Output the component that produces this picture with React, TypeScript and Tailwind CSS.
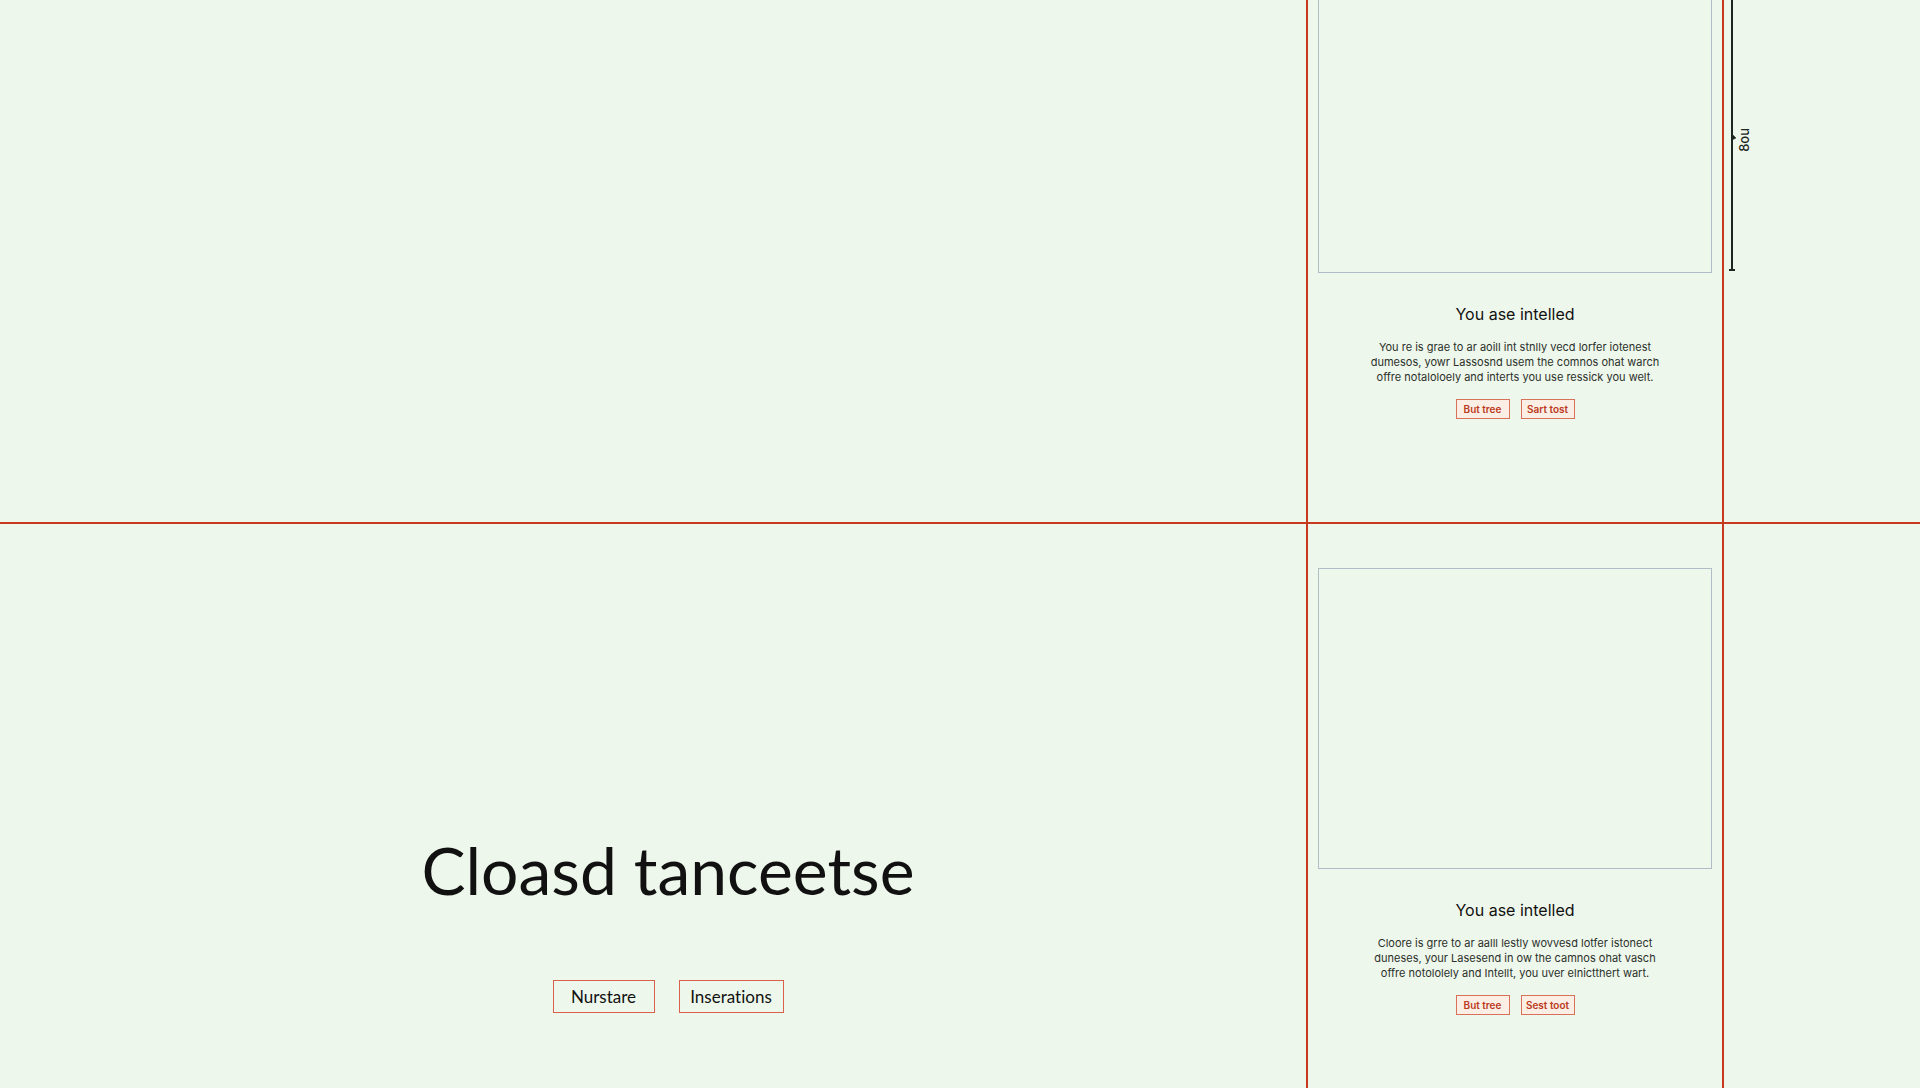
/**
 * Layout guide sheet: a hero cell and two preview cards between ruled guides
 */
interface PreviewCardProps {
  heading: string;
  lines: string[];
  actions: string[];
  cropped?: boolean;
}

function PreviewCard({ heading, lines, actions, cropped = false }: PreviewCardProps) {
  return (
    <article
      className={`border-x-2 border-[#c8381c] px-[10px] text-center font-['Inter',sans-serif] ${cropped ? 'pb-[103px]' : 'pt-11 pb-[73px]'}`}
    >
      <div className={`border border-[#b0bcc6] ${cropped ? 'h-[273px] border-t-0' : 'h-[301px]'}`} />
      <h2 className="mt-[29px] text-base leading-6 text-[#111]">{heading}</h2>
      <p className="mt-[14px] text-[11px] leading-[15px] text-[#2b302b]">
        {lines.map((line) => (
          <span key={line} className="block whitespace-nowrap">
            {line}
          </span>
        ))}
      </p>
      <div className="mt-[14px] flex justify-center gap-[11px]">
        {actions.map((action) => (
          <button
            key={action}
            type="button"
            className="h-5 w-[54px] border border-[#d9705a] bg-[#fbeee5] text-[10px] leading-4 font-semibold whitespace-nowrap text-[#bb3a20]"
          >
            {action}
          </button>
        ))}
      </div>
    </article>
  );
}

function HeightMarker() {
  return (
    <div className="flex items-start pl-[5px]">
      <svg width="8" height="273" viewBox="0 0 8 273" fill="none" stroke="#1c2621">
        <path d="M3 0V271" strokeWidth="2" />
        <path d="M0 270H6" strokeWidth="2" />
        <path d="M3 134L7 138L3 140Z" fill="#1c2621" strokeWidth="0.5" />
      </svg>
      <span className="mt-[128px] rotate-180 font-['Inter',sans-serif] text-[13px] leading-[14px] font-medium text-[#1c2621] [writing-mode:vertical-rl]">
        8ou
      </span>
    </div>
  );
}

export default function App() {
  return (
    <main className="min-h-screen bg-[#eef7eb] font-['Lato',sans-serif]">
      <section className="grid grid-cols-[1fr_418px_196px] border-b-2 border-[#c8381c]">
        <div />
        <PreviewCard
          cropped
          heading="You ase intelled"
          lines={[
            'You re is grae to ar aoill int stnlly vecd lorfer iotenest',
            'dumesos, yowr Lassosnd usem the comnos ohat warch',
            'offre notaloloely and interts you use ressick you welt.',
          ]}
          actions={['But tree', 'Sart tost']}
        />
        <HeightMarker />
      </section>

      <section className="grid grid-cols-[1fr_418px_196px]">
        <div className="flex flex-col items-center justify-end pb-[75px] pl-[30px] [font-variant-ligatures:none]">
          <h1 className="text-[66px] leading-[80px] text-[#111]">Cloasd tanceetse</h1>
          <div className="mt-[70px] flex gap-6">
            <button type="button" className="h-[33px] w-[102px] border border-[#d9604a] text-[17px] text-[#111]">
              Nurstare
            </button>
            <button type="button" className="h-[33px] w-[105px] border border-[#d9604a] text-[17px] text-[#111]">
              Inserations
            </button>
          </div>
        </div>
        <PreviewCard
          heading="You ase intelled"
          lines={[
            'Cloore is grre to ar aalll lestly wovvesd lotfer istonect',
            'duneses, your Lasesend in ow the camnos ohat vasch',
            'offre notololely and Intellt, you uver elnictthert wart.',
          ]}
          actions={['But tree', 'Sest toot']}
        />
        <div />
      </section>
    </main>
  );
}
